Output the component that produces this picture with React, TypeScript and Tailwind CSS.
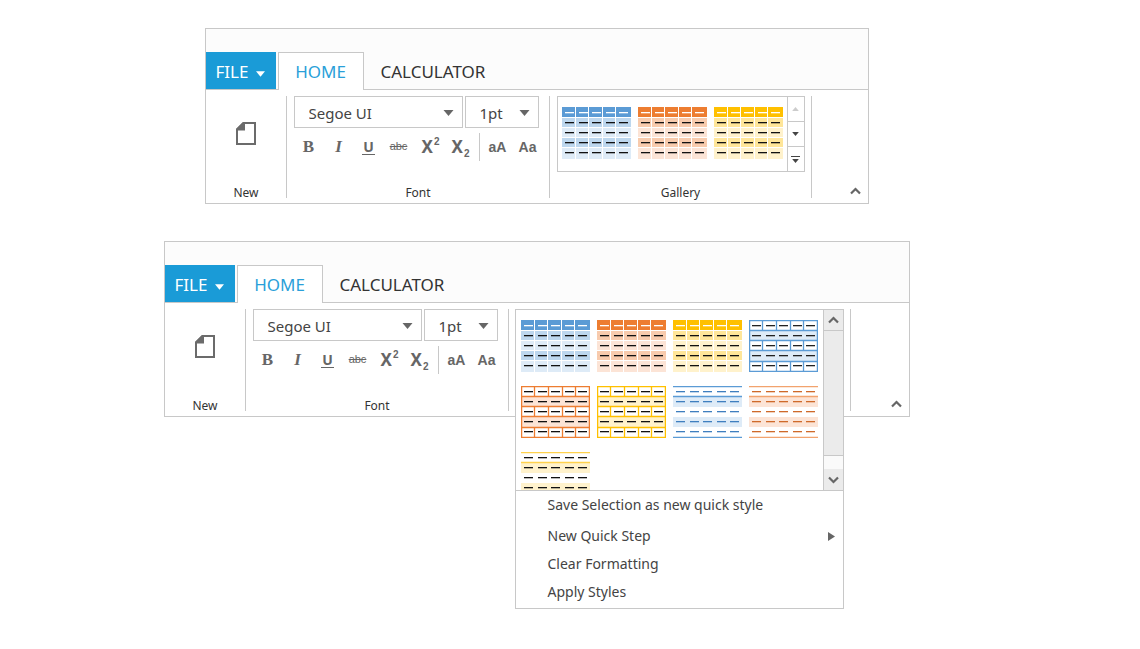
import { useId } from "react";
import type { ReactNode } from "react";

type Kind = "banded" | "grid" | "lines";
type Swatch = {
  label: string;
  kind: Kind;
  main: string;
  dark: string;
  light: string;
  dash: string;
};

const swatches: Swatch[] = [
  { label: "Blue banded", kind: "banded", main: "#5b9bd5", dark: "#bdd7ee", light: "#deebf7", dash: "#111111" },
  { label: "Orange banded", kind: "banded", main: "#ed7d31", dark: "#f8cbad", light: "#fce4d6", dash: "#111111" },
  { label: "Gold banded", kind: "banded", main: "#ffc000", dark: "#ffe699", light: "#fff2cc", dash: "#111111" },
  { label: "Blue grid", kind: "grid", main: "#5b9bd5", dark: "#bdd7ee", light: "#deebf7", dash: "#222222" },
  { label: "Orange grid", kind: "grid", main: "#ed7d31", dark: "#f8cbad", light: "#fce4d6", dash: "#111111" },
  { label: "Gold grid", kind: "grid", main: "#ffc000", dark: "#ffe699", light: "#fff2cc", dash: "#111111" },
  { label: "Blue lines", kind: "lines", main: "#5b9bd5", dark: "#bdd7ee", light: "#deebf7", dash: "#3f7fbf" },
  { label: "Orange lines", kind: "lines", main: "#f2a36e", dark: "#f8cbad", light: "#fce4d6", dash: "#cf6a2a" },
  { label: "Gold lines", kind: "lines", main: "#ffd24d", dark: "#ffe699", light: "#fff2cc", dash: "#111111" },
];

const cells = [0, 1, 2, 3, 4];
const colX = [0, 14, 27, 41, 54];
const rowY = [0, 11, 21, 31, 41];

function TableThumb({ swatch }: { swatch: Swatch }) {
  const { kind, main, dark, light, dash } = swatch;
  return (
    <svg className="block" width="69" height="52" viewBox="0 0 69 52" aria-hidden="true">
      {kind === "banded" &&
        cells.map((r) =>
          cells.map((c) => (
            <rect
              key={`${r}-${c}`}
              x={colX[c]}
              y={rowY[r]}
              width={(colX[c + 1] ?? 70) - colX[c] - 1}
              height={(rowY[r + 1] ?? 52) - rowY[r] - (r === 4 ? 0 : 1)}
              fill={r === 0 ? main : r % 2 ? dark : light}
            />
          )),
        )}
      {kind !== "banded" && (
        <>
          <rect x="0" y="11" width="69" height="10" fill={light} />
          <rect x="0" y="31" width="69" height="10" fill={light} />
        </>
      )}
      {kind === "grid" && (
        <g stroke={main} strokeWidth="1.3" fill="none">
          <rect x="0.6" y="0.6" width="67.8" height="50.8" />
          <path d="M0 10.5H69M0 20.5H69M0 30.5H69M0 41.5H69" />
          <path d="M13.5 0V10M27.5 0V10M41.5 0V10M54.5 0V10M13.5 21V30M27.5 21V30M41.5 21V30M54.5 21V30M13.5 42V51M27.5 42V51M41.5 42V51M54.5 42V51" />
        </g>
      )}
      {kind === "lines" && <path d="M0 0.6H69M0 10.5H69M0 51.4H69" stroke={main} strokeWidth="1.3" />}
      {cells.map((r) =>
        cells.map((c) => (
          <rect
            key={`d${r}-${c}`}
            x={colX[c] + 3}
            y={rowY[r] + (r === 0 ? 5 : 4)}
            width="9"
            height="1.3"
            fill={kind === "banded" && r === 0 ? "#ffffff" : dash}
          />
        )),
      )}
    </svg>
  );
}

function Triangle({ className }: { className: string }) {
  return (
    <svg className={className} viewBox="0 0 10 6" aria-hidden="true">
      <path d="M0 0H10L5 6Z" fill="currentColor" />
    </svg>
  );
}

function Chevron({ down = false }: { down?: boolean }) {
  return (
    <svg width="11" height="8" viewBox="0 0 11 8" fill="none" stroke="#666666" strokeWidth="2.2" aria-hidden="true">
      <path d={down ? "M1 1.5L5.5 6L10 1.5" : "M1 6.5L5.5 2L10 6.5"} />
    </svg>
  );
}

function Combo({ label, value, className }: { label: string; value: string; className: string }) {
  return (
    <div className={`relative ${className}`}>
      <select
        aria-label={label}
        className="block h-8 w-full appearance-none border border-[#c8c8c8] bg-white pt-px pl-[14px] text-[15px] leading-7 text-[#444444]"
        defaultValue={value}
      >
        <option>{value}</option>
      </select>
      <Triangle className="pointer-events-none absolute top-[14px] right-[9px] h-[6px] w-[11px] text-[#666666]" />
    </div>
  );
}

function Tool({ label, children }: { label: string; children: ReactNode }) {
  return (
    <button type="button" aria-label={label} className="flex h-7 w-[30px] shrink-0 items-center justify-center text-sm font-bold text-[#666666]">
      {children}
    </button>
  );
}

function Group({ title, className, children }: { title?: string; className: string; children: ReactNode }) {
  const id = useId();
  return (
    <section
      aria-labelledby={title ? id : undefined}
      className={`flex h-[102px] shrink-0 flex-col border-r border-[#c8c8c8] ${className}`}
    >
      {children}
      {title && (
        <h3 id={id} className="mt-auto -mb-px pl-px text-center text-xs leading-3 text-[#333333]">
          {title}
        </h3>
      )}
    </section>
  );
}

function Ribbon({ className, children }: { className: string; children: ReactNode }) {
  return (
    <div className={`w-full border border-[#c8c8c8] bg-white ${className}`}>
      <nav className="flex border-b border-[#c8c8c8] bg-[#fcfcfc] pt-[23px] text-[17px] text-[#333333]">
        <button type="button" className="flex h-[37px] w-[70px] items-center justify-center gap-2 bg-[#1a9bd7] pt-[2px] text-white">
          FILE
          <Triangle className="mt-1 h-[6px] w-[9px]" />
        </button>
        <button
          type="button"
          className="-mb-px ml-[2px] h-[38px] w-[86px] border border-b-0 border-[#c8c8c8] bg-white text-[#2a9fd9]"
        >
          HOME
        </button>
        <button type="button" className="h-[37px] px-[17px] pt-[2px]">
          CALCULATOR
        </button>
      </nav>
      <div className="flex pt-[6px] pb-[5px]">
        <Group title="New" className="w-[81px]">
          <button type="button" aria-label="New document" className="flex h-[74px] items-center justify-center">
            <svg width="20" height="23" viewBox="0 0 20 23" aria-hidden="true">
              <path d="M7.5 1H19V22H1V7.5Z" fill="none" stroke="#6b6b6b" strokeWidth="2" />
              <path d="M7 0H9V8.5H0V7Z" fill="#6b6b6b" />
            </svg>
          </button>
        </Group>
        <Group title="Font" className="w-[263px]">
          <div className="pl-[7px]">
            <div className="flex gap-[2px]">
              <Combo label="Font family" value="Segoe UI" className="w-[169px]" />
              <Combo label="Font size" value="1pt" className="w-[74px]" />
            </div>
            <div className="mt-[5px] flex items-center">
              <Tool label="Bold">
                <span className="font-['Liberation_Serif'] text-[17px]">B</span>
              </Tool>
              <Tool label="Italic">
                <span className="font-['Liberation_Serif'] text-[17px] italic">I</span>
              </Tool>
              <Tool label="Underline">
                <span className="border-b border-[#666666] px-[1px] leading-[14px]">U</span>
              </Tool>
              <Tool label="Strikethrough">
                <span className="font-['Liberation_Sans'] text-[11px] font-normal line-through">abc</span>
              </Tool>
              <div className="flex pl-[2px]">
                <Tool label="Superscript">
                  <span className="text-[17px]">
                    X<sup className="-top-2 ml-px font-['Liberation_Sans'] text-[10px]">2</sup>
                  </span>
                </Tool>
                <Tool label="Subscript">
                  <span className="text-[17px]">
                    X<sub className="-bottom-1 ml-px font-['Liberation_Sans'] text-[10px]">2</sub>
                  </span>
                </Tool>
              </div>
              <span className="ml-[3px] h-7 w-px bg-[#c8c8c8]" />
              <div className="flex pl-[3px] font-['Liberation_Sans']">
                <Tool label="Grow case">aA</Tool>
                <Tool label="Change case">Aa</Tool>
              </div>
            </div>
          </div>
        </Group>
        {children}
        <div className="flex flex-1 items-end justify-end pr-[7px] pb-[3px]">
          <button type="button" aria-label="Collapse ribbon">
            <Chevron />
          </button>
        </div>
      </div>
    </div>
  );
}

function ThumbButton({ swatch }: { swatch: Swatch }) {
  return (
    <button type="button" aria-label={swatch.label} className="h-[52px] w-[69px]">
      <TableThumb swatch={swatch} />
    </button>
  );
}

function InlineGallery() {
  return (
    <div className="flex h-[76px] border border-[#c8c8c8]">
      <div className="flex flex-1 gap-[7px] pt-[10px] pl-1">
        {swatches.slice(0, 3).map((s) => (
          <ThumbButton key={s.label} swatch={s} />
        ))}
      </div>
      <div className="flex w-[17px] flex-col divide-y divide-[#c8c8c8] border-l border-[#c8c8c8]">
        <button type="button" aria-label="Scroll up" className="flex flex-1 items-center justify-center">
          <Triangle className="h-1 w-[7px] rotate-180 text-[#cccccc]" />
        </button>
        <button type="button" aria-label="Scroll down" className="flex flex-1 items-center justify-center">
          <Triangle className="h-1 w-[7px] text-[#444444]" />
        </button>
        <button type="button" aria-label="Expand gallery" className="flex flex-1 flex-col items-center justify-center gap-[2px]">
          <span className="h-px w-[9px] bg-[#444444]" />
          <Triangle className="h-1 w-[7px] text-[#444444]" />
        </button>
      </div>
    </div>
  );
}

function GalleryPopup() {
  return (
    <div className="absolute top-0 right-[6px] left-[6px] z-10 border border-[#c8c8c8] bg-white">
      <div className="flex h-[181px] overflow-hidden border-b border-[#c8c8c8]">
        <div className="grid flex-1 grid-cols-[repeat(4,69px)] content-start gap-x-[7px] gap-y-[14px] pt-[10px] pl-[5px]">
          {swatches.map((s) => (
            <ThumbButton key={s.label} swatch={s} />
          ))}
        </div>
        <div className="flex w-[20px] flex-col border-l border-[#c8c8c8] bg-[#fafafa]">
          <button type="button" aria-label="Scroll up" className="flex h-[20px] items-center justify-center bg-[#ebebeb]">
            <Chevron />
          </button>
          <div className="flex-1 border-y border-[#c8c8c8] bg-[#ebebeb]" />
          <button type="button" aria-label="Scroll down" className="mt-[13px] flex h-[21px] items-center justify-center bg-[#ebebeb]">
            <Chevron down />
          </button>
        </div>
      </div>
      <ul className="text-sm text-[#444444]">
        <li className="mb-1">
          <button type="button" className="h-[27px] w-full pl-8 text-left">
            Save Selection as new quick style
          </button>
        </li>
        <li>
          <button type="button" className="flex h-7 w-full items-center justify-between pr-2 pl-8">
            New Quick Step
            <svg width="7" height="9" viewBox="0 0 7 9" aria-hidden="true">
              <path d="M0 0L7 4.5L0 9Z" fill="#666666" />
            </svg>
          </button>
        </li>
        <li>
          <button type="button" className="h-7 w-full pl-8 text-left">
            Clear Formatting
          </button>
        </li>
        <li className="pb-[2px]">
          <button type="button" className="h-7 w-full pl-8 text-left">
            Apply Styles
          </button>
        </li>
      </ul>
    </div>
  );
}

export default function App() {
  return (
    <main className="flex min-h-screen flex-col items-center gap-[37px] bg-white pt-[28px] pr-[67px] font-['Noto_Sans','Open_Sans',sans-serif]">
      <Ribbon className="max-w-[664px]">
        <Group title="Gallery" className="w-[262px]">
          <div className="pr-[6px] pl-[7px]">
            <InlineGallery />
          </div>
        </Group>
      </Ribbon>
      <Ribbon className="max-w-[746px]">
        <Group className="relative w-[342px]">
          <GalleryPopup />
        </Group>
      </Ribbon>
    </main>
  );
}
